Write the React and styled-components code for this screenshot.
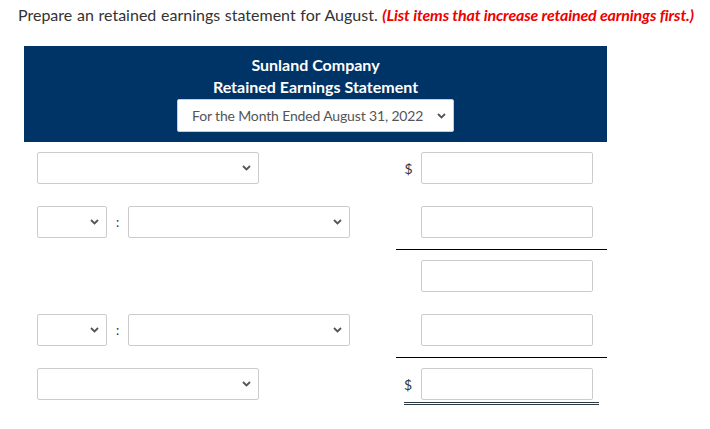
import React from "react";
import styled, { createGlobalStyle } from "styled-components";

const GlobalStyle = createGlobalStyle`
  body {
    margin: 0;
    background: #ffffff;
    font-family: Lato, "Liberation Sans", sans-serif;
    color: #333333;
  }
`

const Page = styled.div`
  padding: 4px 0 0 18px;
  width: 692px;
`

const Prompt = styled.p`
  margin: 0;
  font-size: 16px;
  line-height: 22px;
  color: #333333;
  white-space: nowrap;
  word-spacing: 0.6px;
`

const Hint = styled.span`
  color: #ee0000;
  font-weight: 700;
  font-style: italic;
  letter-spacing: -0.15px;
  word-spacing: 0;
`

const Statement = styled.div`
  margin: 20px 0 0 6px;
  width: 583px;
`

const Header = styled.div`
  background: #003366;
  color: #ffffff;
  padding: 8px 0 10px;
  display: flex;
  flex-direction: column;
  align-items: center;
`

const HeaderLine = styled.div`
  font-weight: 700;
  font-size: 16px;
  line-height: 22px;
`

const Row = styled.div`
  display: grid;
  grid-template-columns: 372px 211px;
  padding-top: 10px;
`

const LeftCell = styled.div`
  display: flex;
  align-items: center;
  padding-left: 13px;
  height: 32px;
`

const RightCell = styled.div`
  display: flex;
  align-items: center;
  height: 32px;
  padding-bottom: ${p => (p.$double ? "2px" : "11px")};
  border-bottom: 1px solid ${p => (p.$rule ? "#000000" : "transparent")};
  ${p => p.$double && `
    border-bottom: 3px double #2b3a42;
    margin: 0 8px;
  `}
`

const Dollar = styled.span`
  width: ${p => (p.$double ? "17px" : "25px")};
  font-size: 14px;
  text-align: ${p => (p.$double ? "left" : "center")};
  color: #333333;
`

const Amount = styled.div`
  width: 172px;
  height: 32px;
  box-sizing: border-box;
  border: 1px solid #cccccc;
  border-radius: 2px;
  background: #ffffff;
`

const SelectBox = styled.div`
  width: ${p => p.$w}px;
  height: ${p => p.$h || 32}px;
  box-sizing: border-box;
  border: 1px solid #cccccc;
  border-radius: 2px;
  background: #ffffff;
  display: flex;
  align-items: center;
  justify-content: space-between;
  padding: 0 7px 0 14px;
  font-size: 14px;
  letter-spacing: -0.15px;
  color: #555555;
  margin-top: ${p => p.$mt || 0}px;
`

const Colon = styled.span`
  width: 21px;
  text-align: center;
  font-size: 13px;
  color: #333333;
`

const Chevron = () => (
  <svg width="9" height="6" viewBox="0 0 9 6">
    <path d="M1 1l3.5 3.5L8 1" fill="none" stroke="#555555" strokeWidth="1.8" />
  </svg>
)

function Select({ w, h, mt, children }) {
  return (
    <SelectBox $w={w} $h={h} $mt={mt}>
      <span>{children}</span>
      <Chevron />
    </SelectBox>
  )
}

function PairSelect() {
  return (
    <>
      <Select w={70} />
      <Colon>:</Colon>
      <Select w={222} />
    </>
  )
}

export default function App() {
  return (
    <Page>
      <GlobalStyle />
      <Prompt>
        Prepare an retained earnings statement for August. <Hint>(List items that increase retained earnings first.)</Hint>
      </Prompt>
      <Statement>
        <Header>
          <HeaderLine>Sunland Company</HeaderLine>
          <HeaderLine>Retained Earnings Statement</HeaderLine>
          <Select w={277} h={33} mt={1}>For the Month Ended August 31, 2022</Select>
        </Header>

        <Row>
          <LeftCell><Select w={222} /></LeftCell>
          <RightCell><Dollar>$</Dollar><Amount /></RightCell>
        </Row>
        <Row>
          <LeftCell><PairSelect /></LeftCell>
          <RightCell $rule><Dollar /><Amount /></RightCell>
        </Row>
        <Row>
          <LeftCell />
          <RightCell><Dollar /><Amount /></RightCell>
        </Row>
        <Row>
          <LeftCell><PairSelect /></LeftCell>
          <RightCell $rule><Dollar /><Amount /></RightCell>
        </Row>
        <Row>
          <LeftCell><Select w={222} /></LeftCell>
          <RightCell $double><Dollar $double>$</Dollar><Amount /></RightCell>
        </Row>
      </Statement>
    </Page>
  )
}
